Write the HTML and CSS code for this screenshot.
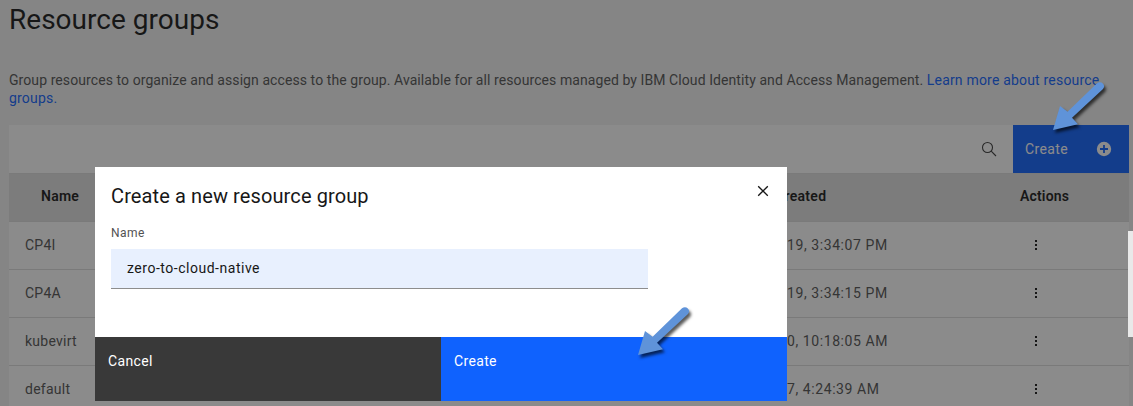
FILE: index.html
```html
<!DOCTYPE html>
<html lang="en">
<head>
<meta charset="utf-8">
<title>Resource groups</title>
<link rel="stylesheet" href="styles.css">
</head>
<body>
<svg class="defs" width="0" height="0" aria-hidden="true">
  <symbol id="dots" viewBox="0 0 16 16"><path d="M7 3h2v2H7zM7 7h2v2H7zM7 11h2v2H7z"/></symbol>
  <symbol id="arrow" viewBox="0 0 60 58"><path d="M3 51 10 27 17.600 32.700 47 4.300C51 1 56.500 6 53 10L22 38.700 28 45.300Z"/></symbol>
</svg>
<main class="page">
  <h1 class="title">Resource groups</h1>
  <p class="intro"><span class="copy">Group resources to organize and assign access to the group. Available for all resources managed by IBM Cloud Identity and Access Management.</span> <a class="link">Learn more about resource<br>groups.</a></p>
  <section class="table">
    <div class="toolbar">
      <svg class="search" viewBox="0 0 16 16"><circle cx="6.500" cy="6.500" r="5"/><path d="M10.200 10.200 15 15"/></svg>
      <button class="create">Create
        <svg class="plus" viewBox="0 0 16 16"><circle cx="8" cy="8" r="7.200"/><path d="M8 4v8M4 8h8"/></svg>
      </button>
    </div>
    <div class="row head"><span class="name">Name</span><span class="date">Created</span><span class="actions">Actions</span></div>
    <div class="row"><span class="name">CP4I</span><span class="date">19, 3:34:07 PM</span><span class="actions"><svg class="dots"><use href="#dots"/></svg></span></div>
    <div class="row"><span class="name">CP4A</span><span class="date">19, 3:34:15 PM</span><span class="actions"><svg class="dots"><use href="#dots"/></svg></span></div>
    <div class="row"><span class="name">kubevirt</span><span class="date">0, 10:18:05 AM</span><span class="actions"><svg class="dots"><use href="#dots"/></svg></span></div>
    <div class="row"><span class="name">default</span><span class="date">7, 4:24:39 AM</span><span class="actions"><svg class="dots"><use href="#dots"/></svg></span></div>
  </section>
</main>
<div class="overlay"></div>
<div class="side-tab"></div>
<div class="modal" role="dialog">
  <div class="modal-body">
    <div class="modal-head">
      <h2 class="modal-title">Create a new resource group</h2>
      <svg class="close" viewBox="0 0 12 12"><path d="M1.200 1.200 10.800 10.800M10.800 1.200 1.200 10.800"/></svg>
    </div>
    <div class="label">Name</div>
    <div class="field"><span>zero-to-cloud-native</span></div>
  </div>
  <div class="modal-foot">
    <button class="btn cancel">Cancel</button>
    <button class="btn primary">Create</button>
  </div>
</div>
<svg class="arrow arrow-toolbar"><use href="#arrow"/></svg>
<svg class="arrow arrow-modal"><use href="#arrow"/></svg>
</body>
</html>
```
FILE: styles.css
```css
* { box-sizing: border-box; }
body { margin: 0; height: 406px; overflow: hidden; position: relative; background: #f3f3f3; color: #171717; font: 14px/18px Roboto, "Liberation Sans", sans-serif; letter-spacing: .16px; }
button { border: 0; font: inherit; letter-spacing: inherit; text-align: left; }
.defs { position: absolute; }
.page { padding: 0 4px 0 9px; height: 406px; overflow: hidden; }
.title { margin: 0; padding-top: 1px; height: 71px; font-size: 28px; line-height: 38px; font-weight: 400; letter-spacing: .02px; }
.intro { margin: 0; height: 54px; color: #525252; white-space: nowrap; letter-spacing: .08px; }
.link { color: #0f62fe; letter-spacing: .19px; }
.table { background: #fff; }
.toolbar { height: 48px; display: flex; align-items: center; justify-content: flex-end; }
.search { width: 16px; height: 16px; margin-right: 16px; fill: none; stroke: #393939; stroke-width: 1.1; }
.create { width: 116px; height: 48px; padding: 0 17px 0 12px; background: #0f62fe; color: #fff; display: flex; align-items: center; justify-content: space-between; letter-spacing: .4px; }
.plus { width: 16px; height: 16px; fill: #fff; stroke: #0f62fe; stroke-width: 1.8; }
.plus circle { stroke: none; }
.row { height: 48px; padding-bottom: 1px; display: grid; grid-template-columns: 778px 233px 109px; align-items: center; border-top: 1px solid #dcdcdc; color: #525252; }
.head { padding-bottom: 3px; background: #e0e0e0; color: #171717; font-weight: 600; }
.name { padding-left: 16px; letter-spacing: .25px; }
.head .name { padding-left: 32px; }
.head .date { margin-left: -12px; letter-spacing: .3px; }
.date { letter-spacing: .58px; }
.dots { display: block; width: 16px; height: 16px; margin-left: 8px; fill: #171717; }
.overlay { position: absolute; inset: 0; background: rgba(23, 23, 23, .5); }
.side-tab { position: absolute; left: 1128px; top: 231px; width: 5px; height: 106px; background: #e9e9e9; }
.modal { position: absolute; left: 95px; top: 167px; width: 692px; height: 234px; background: #fff; display: flex; flex-direction: column; }
.modal-body { height: 170px; padding: 16px 18px 0 16px; }
.modal-head { display: flex; justify-content: space-between; height: 42px; }
.modal-title { margin: 0; font-size: 20px; line-height: 26px; font-weight: 400; letter-spacing: .11px; }
.close { width: 12px; height: 12px; margin-top: 2px; stroke: #171717; stroke-width: 1.3; }
.label { height: 24px; line-height: 16px; font-size: 12px; color: #525252; letter-spacing: .45px; }
.field { width: 537px; height: 40px; padding: 0 0 2px 16px; background: #e8f0fe; border-bottom: 1px solid #8d8d8d; display: flex; align-items: center; letter-spacing: .52px; }
.modal-foot { height: 64px; display: flex; }
.btn { width: 346px; height: 64px; padding: 15px 13px 31px; color: #fff; letter-spacing: .35px; }
.cancel { background: #393939; }
.primary { background: #0f62fe; }
.arrow { position: absolute; width: 60px; height: 58px; fill: #5f93d9; filter: drop-shadow(2px 3px 1.500px rgba(0, 0, 0, .65)); }
.arrow-toolbar { left: 1050px; top: 79px; }
.arrow-modal { left: 635px; top: 304px; }
```
